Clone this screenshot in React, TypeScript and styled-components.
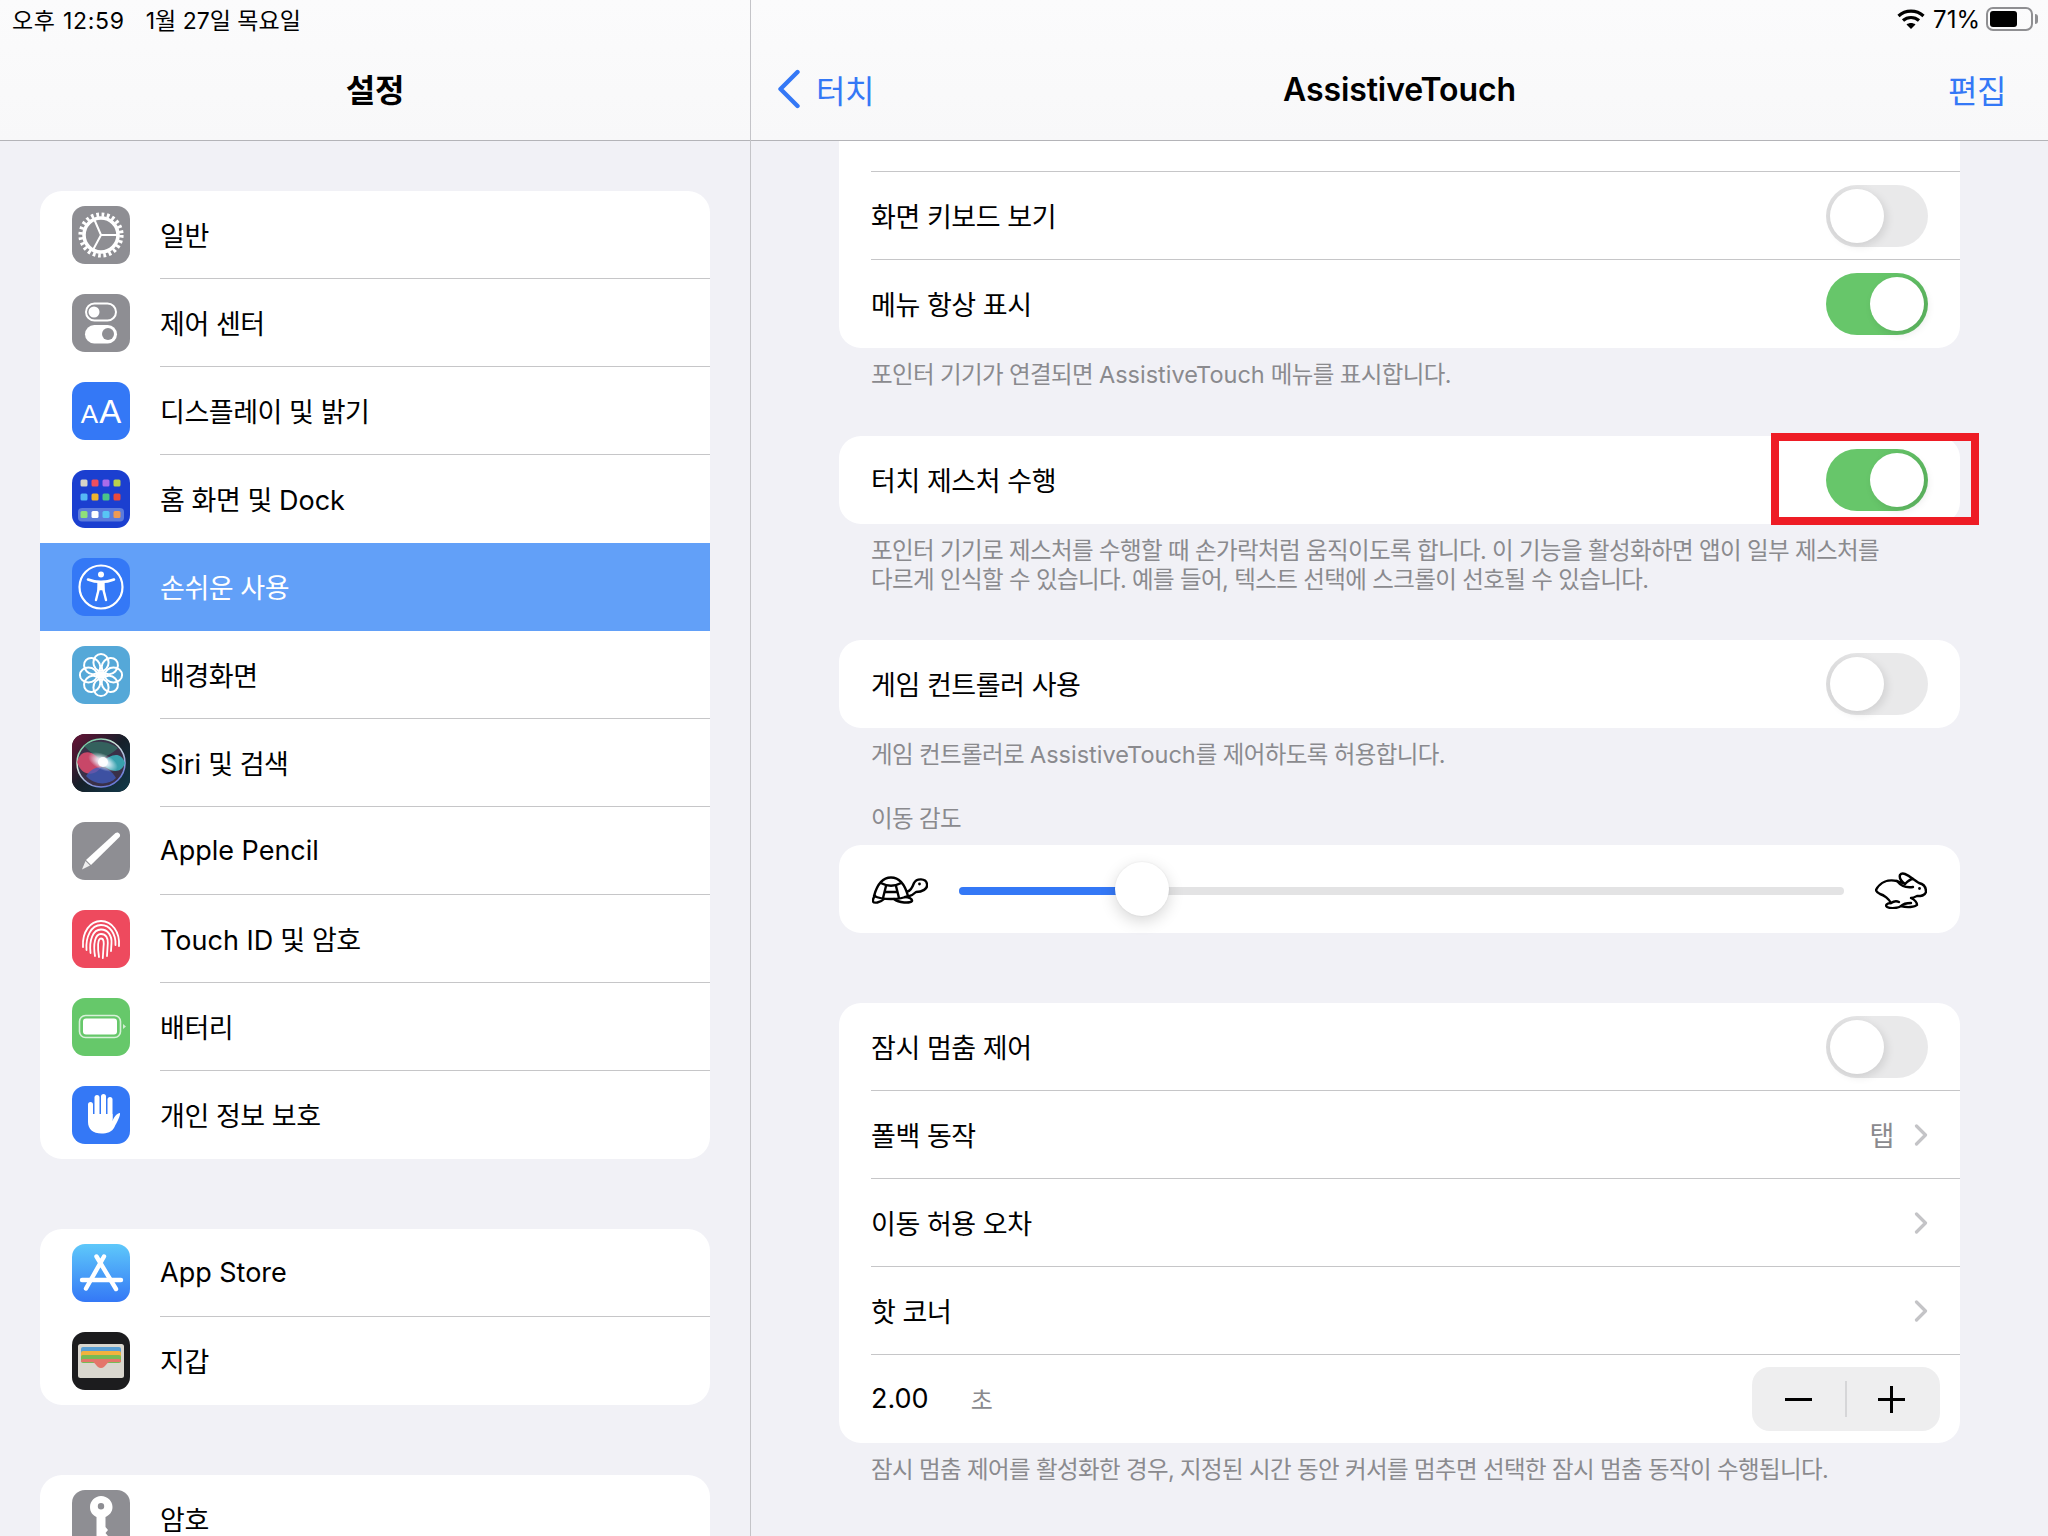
import React from 'react';
import styled, { createGlobalStyle } from 'styled-components';

const FONT = `Inter, "Noto Sans CJK KR", sans-serif`;
const BLUE = '#3478f6';

const GlobalStyle = createGlobalStyle`
  html, body {
    margin: 0;
    padding: 0;
    background: #f1f1f6;
    font-family: ${FONT};
    color: #000;
  }
`;

/* ---------- icons ---------- */

const GearIcon = () => (
  <svg width="58" height="58" viewBox="0 0 58 58">
    <circle cx="29" cy="29" r="17" fill="none" stroke="#fff" strokeWidth="3.6" />
    <circle cx="29" cy="29" r="20.4" fill="none" stroke="#fff" strokeWidth="4.4" strokeDasharray="2.7 2.64" />
    <path d="M29 29 L22.5 14 M29 29 L45 29 M29 29 L21.5 43" stroke="#fff" strokeWidth="2" fill="none" />
  </svg>
);

const SwitchesIcon = () => (
  <svg width="58" height="58" viewBox="0 0 58 58">
    <rect x="14" y="9.5" width="30" height="17" rx="8.5" fill="none" stroke="#fff" strokeWidth="2" />
    <circle cx="22" cy="18" r="5.5" fill="#fff" />
    <rect x="13" y="31" width="32" height="18.5" rx="9.25" fill="#fff" />
    <circle cx="36" cy="40" r="6" fill="#8e8e93" />
  </svg>
);

const HOME_DOTS = [
  ['#d6d4c8', '#ee4f5e', '#a86bea', '#b9d24e'],
  ['#55b8f5', '#f0b52e', '#4bc388', '#ea4a3c'],
];
const DOCK_DOTS = ['#8fe07a', '#ffffff', '#58c5f5', '#f09a52'];

const HomeIcon = () => (
  <svg width="58" height="58" viewBox="0 0 58 58">
    {HOME_DOTS.map((row, r) =>
      row.map((c, i) => <rect key={`${r}-${i}`} x={8.5 + i * 11} y={9.5 + r * 14} width="7" height="7" rx="1.5" fill={c} />),
    )}
    <rect x="6" y="38" width="46" height="13.5" rx="4" fill="#5c7bdc" />
    {DOCK_DOTS.map((c, i) => (
      <rect key={c} x={8.5 + i * 11} y="41" width="7" height="7" rx="1.5" fill={c} />
    ))}
  </svg>
);

const AccessIcon = () => (
  <svg width="58" height="58" viewBox="0 0 58 58">
    <circle cx="29" cy="29" r="21.5" fill="none" stroke="#fff" strokeWidth="2.2" />
    <circle cx="29" cy="16.5" r="3" fill="#fff" />
    <path d="M16 21.5 C21 23.5 25 24 29 24 C33 24 37 23.5 42 21.5" stroke="#fff" strokeWidth="2.6" fill="none" strokeLinecap="round" />
    <path d="M26.5 24 L26.5 32 L24 42 M31.5 24 L31.5 32 L34 42 M26.5 31 H31.5 V24 H26.5 Z" stroke="#fff" strokeWidth="2.4" fill="#fff" strokeLinecap="round" />
  </svg>
);

const FlowerIcon = () => (
  <svg width="58" height="58" viewBox="0 0 58 58">
    {[0, 45, 90, 135, 180, 225, 270, 315].map((a) => (
      <ellipse key={a} cx="29" cy="16.5" rx="7.6" ry="8.6" fill="none" stroke="#fff" strokeWidth="2" transform={`rotate(${a} 29 29)`} />
    ))}
    <circle cx="29" cy="29" r="3.4" fill="#fff" />
  </svg>
);

const SiriIcon = () => (
  <svg width="58" height="58" viewBox="0 0 58 58">
    <defs>
      <linearGradient id="siriBg" x1="0" y1="0" x2="1" y2="1">
        <stop offset="0" stopColor="#6a1236" />
        <stop offset="0.5" stopColor="#15202a" />
        <stop offset="1" stopColor="#123a4a" />
      </linearGradient>
      <linearGradient id="siriRing" x1="0" y1="0" x2="0.6" y2="1">
        <stop offset="0" stopColor="#4cc08a" />
        <stop offset="0.45" stopColor="#d8e8e0" />
        <stop offset="1" stopColor="#6a7ad8" />
      </linearGradient>
      <radialGradient id="siriGlow">
        <stop offset="0" stopColor="#ffffff" />
        <stop offset="0.4" stopColor="#eef6ff" stopOpacity="0.85" />
        <stop offset="1" stopColor="#e8f4ff" stopOpacity="0" />
      </radialGradient>
    </defs>
    <rect width="58" height="58" fill="url(#siriBg)" />
    <circle cx="29" cy="29" r="24" fill="#3a3048" stroke="url(#siriRing)" strokeWidth="1.6" />
    <path d="M5 28 C9 14 22 16 31 29 C26 43 10 44 5 28 Z" fill="#d84a6c" opacity="0.9" />
    <path d="M53 29 C49 18 40 19 29 29 C37 38 49 41 53 29 Z" fill="#38aeb8" opacity="0.9" />
    <path d="M14 42 C22 30 36 30 44 44 C36 52 22 51 14 42 Z" fill="#3f5cc0" opacity="0.75" />
    <path d="M12 12 C20 6 36 6 46 14 C40 20 30 24 28 26 C24 22 18 18 12 12 Z" fill="#2f8a70" opacity="0.55" />
    <ellipse cx="31" cy="28" rx="16" ry="8" fill="url(#siriGlow)" transform="rotate(25 31 28)" />
    <circle cx="31" cy="28" r="5" fill="#fff" opacity="0.9" />
  </svg>
);

const PencilIcon = () => (
  <svg width="58" height="58" viewBox="0 0 58 58">
    <path d="M43.5 11 C46 9 49.5 12.5 47.5 15 L19 43 L14 38 Z" fill="#fff" />
    <path d="M13.5 39 L18 43.5 L10 47.5 Z" fill="#fff" opacity="0.85" />
  </svg>
);

const FingerprintIcon = () => (
  <svg width="58" height="58" viewBox="0 0 58 58" fill="none" stroke="#fff" strokeWidth="1.8" strokeLinecap="round">
    <path d="M11 37 C10 22 18 11 29 11 C40 11 48 22 47 36" />
    <path d="M14.5 40 C13.5 27 19 15 29 15 C38 15 44 24 43.5 35" />
    <path d="M18.5 43 C17 30 21 19.5 29 19.5 C36 19.5 40 26 39.5 33 L39 41" />
    <path d="M23 46 C21 34 23 24 29 24 C34 24 36 28 35.8 33 L35 46" />
    <path d="M27 47 C25.5 38 25.5 28.5 29 28.5 C32 28.5 32 33 31.5 37 L30.8 48" />
  </svg>
);

const BatteryIcon = () => (
  <svg width="58" height="58" viewBox="0 0 58 58">
    <rect x="7.5" y="17.5" width="41" height="22" rx="6" fill="none" stroke="#fff" strokeOpacity="0.75" strokeWidth="1.6" />
    <rect x="11" y="20.5" width="34" height="16" rx="3" fill="#fff" />
    <path d="M51 26 L54 28.5 L51 31 Z" fill="#fff" fillOpacity="0.7" />
  </svg>
);

const HandIcon = () => (
  <svg width="58" height="58" viewBox="0 0 58 58" fill="#fff">
    <rect x="16" y="16" width="5" height="20" rx="2.5" />
    <rect x="22.5" y="9" width="5" height="24" rx="2.5" />
    <rect x="29" y="8" width="5" height="24" rx="2.5" />
    <rect x="35.5" y="11" width="5" height="24" rx="2.5" />
    <path d="M16 28 H40.5 V35 C42 31 45 27 48 27 C48.5 30 45 36 42.5 41 C40 46 35 47.5 29.5 47.5 C21 47.5 16 43 16 36 Z" />
  </svg>
);

const StoreIcon = () => (
  <svg width="58" height="58" viewBox="0 0 58 58" fill="none" stroke="#fff" strokeLinecap="round">
    <path d="M24.5 12.5 L44 45 M32 12.5 L14 44.5" strokeWidth="4.4" />
    <path d="M10 36 H49" strokeWidth="4.4" />
  </svg>
);

const WalletIcon = () => (
  <svg width="58" height="58" viewBox="0 0 58 58">
    <rect x="6" y="12" width="46" height="34" rx="2.5" fill="#d9d6ce" />
    <rect x="9" y="15" width="40" height="8" rx="2" fill="#5a9fd4" />
    <rect x="9" y="19" width="40" height="8" rx="2" fill="#f2b23e" />
    <rect x="9" y="23" width="40" height="8" rx="2" fill="#78bb55" />
    <path d="M9 29 C9 28 10 27 11 27 H47 C48 27 49 28 49 29 V30 H38 C34 30 34 36 29 36 C24 36 24 30 20 30 H9 Z" fill="#e4756a" />
  </svg>
);

const KeyIcon = () => (
  <svg width="58" height="58" viewBox="0 0 58 58">
    <path fillRule="evenodd" d="M29 6 C35.5 6 40.5 11 40.5 17 C40.5 22 37.5 25 33.5 27 V37 L36 40 L33.5 43 L36 46 L33.5 49 L35 52 L29 58 L24.5 54 V27 C20.5 25 18 22 18 17 C18 11 23 6 29 6 Z M29 13 A3.2 3.2 0 1 0 29 19.4 A3.2 3.2 0 1 0 29 13 Z" fill="#fff" />
  </svg>
);

const Chevron = () => (
  <svg width="14" height="22" viewBox="0 0 14 22" fill="none" stroke="#c4c4c7" strokeWidth="3.2" strokeLinecap="round" strokeLinejoin="round">
    <path d="M2.5 2 L11.5 11 L2.5 20" />
  </svg>
);

const BackChevron = () => (
  <svg width="24" height="40" viewBox="0 0 24 40" fill="none" stroke={BLUE} strokeWidth="4.4" strokeLinecap="round" strokeLinejoin="round">
    <path d="M20.5 3 L3.5 20 L20.5 37" />
  </svg>
);

const WifiIcon = () => (
  <svg width="28" height="20" viewBox="0 0 28 20" fill="none" stroke="#000" strokeWidth="3.2">
    <path d="M1.5 7 C8.5 0.5 19.5 0.5 26.5 7" />
    <path d="M6 11.5 C10.5 7.5 17.5 7.5 22 11.5" />
    <path d="M14 20 L9.5 15.5 C12 13.5 16 13.5 18.5 15.5 Z" fill="#000" stroke="none" />
  </svg>
);

const TurtleIcon = () => (
  <svg width="56" height="28" viewBox="0 0 56 28" fill="none" stroke="#000" strokeWidth="2.4" strokeLinecap="round" strokeLinejoin="round">
    <path d="M2 20 C5 9 11 1.5 19 1.5 C27 1.5 33 9 36 20 C28 24 10 24 2 20 Z" />
    <path d="M10 7.5 C15 10.5 23 10.5 28 7.5 M14 10 L11 22 M24 10 L27 22 M13 16 H25" />
    <path d="M35.5 15.5 C39 15 40.5 11 42 7 C44.5 2 54 2 55 8 C56 13 50 16 44 16 C42 18 39 20 36 20.5" />
    <path d="M22 23 C27 27 38 27.5 40 25 C40.5 23 37 21 33 21" />
    <path d="M12 23 C8 27 2 27.5 1 25.5 C0.5 23.5 2 21 3 19.5" />
    <circle cx="47.5" cy="8" r="1.4" fill="#000" stroke="none" />
  </svg>
);

const RabbitIcon = () => (
  <svg width="52" height="37" viewBox="0 0 52 37" fill="none" stroke="#000" strokeWidth="2.4" strokeLinecap="round" strokeLinejoin="round">
    <path d="M1 18 C5 10 13 7 22 9 L30 12 C26 9 24 6 25 3 C27 0 32 2 38 7 C40 8 42 10 44 11 C49 12 51 16 51 20 C50 24 46 24 42 24 C40 25 38 26 36 26 C40 28 42 30 42 33 C40 35 32 36 26 34 C24 36 16 37 12 35 C10 33 12 31 16 31 C14 27 9 23 5 22 C3 21 1 20 1 18 Z" />
    <path d="M22 9 C26 14 32 16 38 15 M30 12 C33 9 36 7 38 7 M26 34 C28 32 32 31 36 31 M16 31 C19 29 22 29 24 30" />
    <circle cx="44.5" cy="16.5" r="1.4" fill="#000" stroke="none" />
  </svg>
);

/* ---------- shell ---------- */

const Screen = styled.div`
  width: 2048px;
  height: 1536px;
  display: flex;
  overflow: hidden;
  background: #f1f1f6;
`;

const Sidebar = styled.aside`
  width: 750px;
  flex: none;
  display: flex;
  flex-direction: column;
  border-right: 1px solid #c4c4c8;
`;

const Detail = styled.main`
  flex: 1;
  display: flex;
  flex-direction: column;
  min-width: 0;
`;

const Header = styled.header`
  height: 141px;
  flex: none;
  box-sizing: border-box;
  display: flex;
  flex-direction: column;
  background: linear-gradient(180deg, #fbfbfc 0%, #f8f8f9 100%);
  border-bottom: 1px solid #b4b4b8;
`;

const StatusBar = styled.div<{ $right?: boolean }>`
  height: 38px;
  flex: none;
  display: flex;
  align-items: center;
  justify-content: ${(p) => (p.$right ? 'flex-end' : 'flex-start')};
  gap: ${(p) => (p.$right ? '8px' : '21px')};
  padding: ${(p) => (p.$right ? '0 10px 0 0' : '0 0 0 12px')};
  font-size: ${(p) => (p.$right ? '24px' : '23px')};
`;

const ClockText = styled.span`
  letter-spacing: 0.7px;
`;

const Battery = styled.div`
  width: 47px;
  height: 24px;
  box-sizing: border-box;
  border: 2px solid #8f8f92;
  border-radius: 7px;
  padding: 2px;
  position: relative;
  margin-left: -2px;
  margin-right: 5px;
  &::before {
    content: '';
    display: block;
    width: 27px;
    height: 16px;
    background: #000;
    border-radius: 3px;
  }
  &::after {
    content: '';
    position: absolute;
    right: -7px;
    top: 5px;
    width: 3px;
    height: 10px;
    background: #8f8f92;
    border-radius: 0 3px 3px 0;
  }
`;

const NavBar = styled.div`
  flex: 1;
  display: flex;
  align-items: center;
  justify-content: space-between;
  padding: 0 42px 0 26px;
  position: relative;
`;

const NavTitle = styled.h1<{ $lift?: number }>`
  position: absolute;
  left: 0;
  right: 0;
  top: 0;
  bottom: ${(p) => p.$lift ?? 0}px;
  margin: 0;
  display: flex;
  align-items: center;
  justify-content: center;
  font-size: 32px;
  font-weight: 600;
  letter-spacing: -0.1px;
`;

const NavButton = styled.div`
  display: flex;
  align-items: center;
  gap: 15px;
  color: ${BLUE};
  font-size: 32px;
  letter-spacing: -0.4px;
  position: relative;
`;

/* ---------- sidebar list ---------- */

const SideList = styled.div`
  flex: 1;
  min-height: 0;
  overflow: hidden;
  padding: 50px 40px 0;
  display: flex;
  flex-direction: column;
  gap: 70px;
`;

const SideGroup = styled.section`
  flex: none;
  background: #fff;
  border-radius: 22px;
  overflow: hidden;
`;

const SideRow = styled.div<{ $active?: boolean }>`
  height: 88px;
  display: flex;
  align-items: center;
  padding-left: 32px;
  background: ${(p) => (p.$active ? '#62a0f8' : 'transparent')};
  color: ${(p) => (p.$active ? '#fff' : '#000')};
`;

const IconTile = styled.div<{ $bg: string }>`
  width: 58px;
  height: 58px;
  flex: none;
  border-radius: 13px;
  overflow: hidden;
  background: ${(p) => p.$bg};
  display: flex;
  align-items: center;
  justify-content: center;
  margin-right: 30px;
`;

const AaGlyphs = styled.span`
  font-family: 'Liberation Sans', sans-serif;
  color: #fff;
  display: flex;
  align-items: baseline;
  line-height: 1;
  font-size: 33px;
  small {
    font-size: 26px;
    margin-right: 1px;
  }
`;

const SideLabel = styled.div<{ $line: boolean }>`
  flex: 1;
  align-self: stretch;
  display: flex;
  align-items: center;
  white-space: pre;
  font-size: 27px;
  letter-spacing: -0.45px;
  border-bottom: 1px solid ${(p) => (p.$line ? '#c6c6c8' : 'transparent')};
`;

/* Latin runs keep their natural spacing, hangul is tightened around them */
const Latin = styled.span`
  letter-spacing: 0;
`;

function Mixed({ text }: { text: string }) {
  const parts = text.split(/([A-Za-z0-9][A-Za-z0-9. ]*[A-Za-z0-9])/);
  return (
    <span>
      {parts.map((part, i) => (i % 2 ? <Latin key={i}>{part}</Latin> : part))}
    </span>
  );
}

/* ---------- detail content ---------- */

const Content = styled.div`
  flex: 1;
  min-height: 0;
  overflow: hidden;
  padding: 0 88px;
`;

const Card = styled.section<{ $flatTop?: boolean; $after?: number }>`
  position: relative;
  background: #fff;
  border-radius: ${(p) => (p.$flatTop ? '0 0 22px 22px' : '22px')};
  margin-bottom: ${(p) => p.$after ?? 0}px;
`;

const Stub = styled.div`
  height: 31px;
  box-sizing: border-box;
  margin-left: 32px;
  border-bottom: 1px solid #c6c6c8;
`;

const Row = styled.div<{ $line?: boolean }>`
  height: 88px;
  box-sizing: border-box;
  margin-left: 32px;
  display: flex;
  align-items: center;
  justify-content: space-between;
  font-size: 27px;
  letter-spacing: -0.45px;
  padding-right: 32px;
  border-bottom: 1px solid ${(p) => (p.$line ? '#c6c6c8' : 'transparent')};
`;

const ValueRow = styled(Row)`
  padding-right: 20px;
`;

const RowValue = styled.div`
  display: flex;
  align-items: center;
  gap: 20px;
  color: #8a8a8e;
`;

const Seconds = styled.div`
  display: flex;
  align-items: center;
  gap: 42px;
`;

const SecondsUnit = styled.span`
  color: #8a8a8e;
  font-size: 24px;
`;

const Note = styled.p<{ $gap: number }>`
  margin: 0 0 ${(p) => p.$gap}px;
  padding: 12px 32px 0;
  font-size: 23.5px;
  line-height: 29px;
  letter-spacing: -0.62px;
  color: #8a8a8e;
`;

const GroupLabel = styled(Note)`
  margin-top: 35px;
  padding-top: 0;
`;

const Toggle = styled.div<{ $on?: boolean }>`
  width: 102px;
  height: 62px;
  border-radius: 31px;
  position: relative;
  background: ${(p) =>
    p.$on ? 'linear-gradient(90deg, #67c66a 50%, #5fbb62 100%)' : 'linear-gradient(90deg, #dcdcdd 0%, #e9e9ea 45%)'};
  &::after {
    content: '';
    position: absolute;
    top: 4px;
    left: ${(p) => (p.$on ? '44px' : '4px')};
    width: 54px;
    height: 54px;
    border-radius: 50%;
    background: #fff;
    box-shadow: 3px 3px 9px rgba(0, 0, 0, 0.1);
  }
`;

const Highlight = styled.div`
  position: absolute;
  top: -3px;
  right: -19px;
  width: 208px;
  height: 92px;
  box-sizing: border-box;
  border: 8px solid #ee1c25;
`;

const SliderRow = styled.div`
  height: 88px;
  box-sizing: border-box;
  display: flex;
  align-items: center;
  padding: 2px 33px 0;
`;

const SliderTrack = styled.div`
  flex: 1;
  height: 8px;
  margin: 2px 31px 0;
  position: relative;
  border-radius: 4px;
  background: #e3e3e4;
`;

const SliderFill = styled.div`
  height: 100%;
  border-radius: 4px 0 0 4px;
  background: ${BLUE};
`;

const SliderKnob = styled.div`
  position: absolute;
  top: -25px;
  margin-left: -27px;
  width: 54px;
  height: 54px;
  border-radius: 50%;
  background: #fff;
  box-shadow: 0 5px 16px rgba(0, 0, 0, 0.16), 0 0 2px rgba(0, 0, 0, 0.08);
`;

const Stepper = styled.div`
  width: 188px;
  height: 64px;
  box-sizing: border-box;
  padding-right: 2px;
  border-radius: 18px;
  background: #eeeeef;
  display: flex;
  align-items: center;
  position: relative;
  &::before {
    content: '';
    position: absolute;
    left: 93px;
    top: 14px;
    width: 2px;
    height: 36px;
    background: #d6d6d8;
  }
`;

const StepButton = styled.div<{ $plus?: boolean }>`
  flex: 1;
  height: 100%;
  position: relative;
  &::before {
    content: '';
    position: absolute;
    left: 50%;
    top: 50%;
    width: 27px;
    height: 3px;
    margin: -1px 0 0 -13.5px;
    background: #000;
  }
  &::after {
    content: '';
    display: ${(p) => (p.$plus ? 'block' : 'none')};
    position: absolute;
    left: 50%;
    top: 50%;
    width: 3px;
    height: 27px;
    margin: -13px 0 0 -1.5px;
    background: #000;
  }
`;

type SideItem = { label: string; bg: string; icon: React.ReactNode };

const SETTINGS: SideItem[] = [
  { label: '일반', bg: '#8e8e93', icon: <GearIcon /> },
  { label: '제어 센터', bg: '#8e8e93', icon: <SwitchesIcon /> },
  {
    label: '디스플레이 및 밝기',
    bg: BLUE,
    icon: (
      <AaGlyphs>
        <small>A</small>A
      </AaGlyphs>
    ),
  },
  { label: '홈 화면 및 Dock', bg: '#1b3fd0', icon: <HomeIcon /> },
  { label: '손쉬운 사용', bg: BLUE, icon: <AccessIcon /> },
  { label: '배경화면', bg: '#55a8d8', icon: <FlowerIcon /> },
  { label: 'Siri 및 검색', bg: '#18181f', icon: <SiriIcon /> },
  { label: 'Apple Pencil', bg: '#8e8e93', icon: <PencilIcon /> },
  { label: 'Touch ID 및 암호', bg: '#ee4a5e', icon: <FingerprintIcon /> },
  { label: '배터리', bg: '#66c86a', icon: <BatteryIcon /> },
  { label: '개인 정보 보호', bg: BLUE, icon: <HandIcon /> },
];

const STORE_ITEMS: SideItem[] = [
  { label: 'App Store', bg: 'linear-gradient(180deg, #5ec8fa, #3478f6)', icon: <StoreIcon /> },
  { label: '지갑', bg: '#1c1c1e', icon: <WalletIcon /> },
];

const PASSWORD_ITEMS: SideItem[] = [{ label: '암호', bg: '#8e8e93', icon: <KeyIcon /> }];

const ACTIVE_LABEL = '손쉬운 사용';

function SideSection({ items }: { items: SideItem[] }) {
  return (
    <SideGroup>
      {items.map((item, i) => {
        const next = items[i + 1];
        const line = !!next && item.label !== ACTIVE_LABEL && next.label !== ACTIVE_LABEL;
        return (
          <SideRow key={item.label} $active={item.label === ACTIVE_LABEL}>
            <IconTile $bg={item.bg}>{item.icon}</IconTile>
            <SideLabel $line={line}>
              <Mixed text={item.label} />
            </SideLabel>
          </SideRow>
        );
      })}
    </SideGroup>
  );
}

export default function App() {
  const sliderPercent = (183 / 885) * 100;
  return (
    <Screen>
      <GlobalStyle />
      <Sidebar>
        <Header>
          <StatusBar>
            <ClockText>오후 12:59</ClockText>
            <span>1월 27일 목요일</span>
          </StatusBar>
          <NavBar>
            <NavTitle $lift={3}>설정</NavTitle>
          </NavBar>
        </Header>
        <SideList>
          <SideSection items={SETTINGS} />
          <SideSection items={STORE_ITEMS} />
          <SideSection items={PASSWORD_ITEMS} />
        </SideList>
      </Sidebar>

      <Detail>
        <Header>
          <StatusBar $right>
            <WifiIcon />
            <span>71%</span>
            <Battery />
          </StatusBar>
          <NavBar>
            <NavButton>
              <BackChevron />
              터치
            </NavButton>
            <NavTitle>AssistiveTouch</NavTitle>
            <NavButton>편집</NavButton>
          </NavBar>
        </Header>

        <Content>
          <Card $flatTop>
            <Stub />
            <Row $line>
              화면 키보드 보기
              <Toggle />
            </Row>
            <Row>
              메뉴 항상 표시
              <Toggle $on />
            </Row>
          </Card>
          <Note $gap={47}>
            <Mixed text="포인터 기기가 연결되면 AssistiveTouch 메뉴를 표시합니다." />
          </Note>

          <Card>
            <Row>
              터치 제스처 수행
              <Toggle $on />
            </Row>
            <Highlight />
          </Card>
          <Note $gap={46}>
            포인터 기기로 제스처를 수행할 때 손가락처럼 움직이도록 합니다. 이 기능을 활성화하면 앱이 일부 제스처를
            <br />
            다르게 인식할 수 있습니다. 예를 들어, 텍스트 선택에 스크롤이 선호될 수 있습니다.
          </Note>

          <Card>
            <Row>
              게임 컨트롤러 사용
              <Toggle />
            </Row>
          </Card>
          <Note $gap={0}>
            <Mixed text="게임 컨트롤러로 AssistiveTouch를 제어하도록 허용합니다." />
          </Note>

          <GroupLabel $gap={12}>이동 감도</GroupLabel>
          <Card $after={70}>
            <SliderRow>
              <TurtleIcon />
              <SliderTrack>
                <SliderFill style={{ width: `${sliderPercent}%` }} />
                <SliderKnob style={{ left: `${sliderPercent}%` }} />
              </SliderTrack>
              <RabbitIcon />
            </SliderRow>
          </Card>

          <Card>
            <Row $line>
              잠시 멈춤 제어
              <Toggle />
            </Row>
            <Row $line>
              폴백 동작
              <RowValue>
                탭
                <Chevron />
              </RowValue>
            </Row>
            <Row $line>
              이동 허용 오차
              <RowValue>
                <Chevron />
              </RowValue>
            </Row>
            <Row $line>
              핫 코너
              <RowValue>
                <Chevron />
              </RowValue>
            </Row>
            <ValueRow>
              <Seconds>
                <Latin>2.00</Latin>
                <SecondsUnit>초</SecondsUnit>
              </Seconds>
              <Stepper>
                <StepButton />
                <StepButton $plus />
              </Stepper>
            </ValueRow>
          </Card>
          <Note $gap={0}>잠시 멈춤 제어를 활성화한 경우, 지정된 시간 동안 커서를 멈추면 선택한 잠시 멈춤 동작이 수행됩니다.</Note>
        </Content>
      </Detail>
    </Screen>
  );
}
